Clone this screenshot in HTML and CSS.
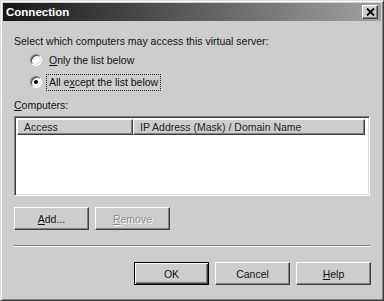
FILE: index.html
```html
<!DOCTYPE html>
<html lang="en">
<head>
  <meta charset="UTF-8">
  <title>Connection</title>
  <link rel="stylesheet" href="styles.css">
</head>
<body>
  <div class="window">
    <div class="titlebar">
      <span class="title">Connection</span>
      <button class="close" title="Close">
        <svg width="9" height="8" viewBox="0 0 9 8">
          <path d="M1 0.5 L8 7.5 M8 0.5 L1 7.5" stroke="#000" stroke-width="1.8" fill="none"/>
        </svg>
      </button>
    </div>

    <div class="content">
      <p class="prompt">Select which computers may access this virtual server:</p>

      <div class="radios">
        <label class="radio">
          <span class="dot"></span>
          <span class="radio-text"><u>O</u>nly the list below</span>
        </label>
        <label class="radio checked">
          <span class="dot"></span>
          <span class="radio-text focus">All e<u>x</u>cept the list below</span>
        </label>
      </div>

      <div class="field-label"><u>C</u>omputers:</div>
      <div class="listbox">
        <div class="list-header">
          <div class="col col-access">Access</div>
          <div class="col col-ip">IP Address (Mask) / Domain Name</div>
        </div>
      </div>

      <div class="button-row">
        <button class="btn"><u>A</u>dd...</button>
        <button class="btn" disabled><u>R</u>emove</button>
      </div>

      <div class="separator"></div>

      <div class="button-row dialog-buttons">
        <button class="btn btn-default">OK</button>
        <button class="btn">Cancel</button>
        <button class="btn"><u>H</u>elp</button>
      </div>
    </div>
  </div>
</body>
</html>
```

FILE: styles.css
```css
body {
  margin: 0;
  padding: 0;
  background: #cdcdcd;
  font-family: "Liberation Sans", Arial, sans-serif;
  font-size: 10.5px;
  line-height: 13px;
  color: #111;
}
.window {
  width: 384px;
  height: 301px;
  box-sizing: border-box;
  background: #cdcdcd;
  border: 1px solid;
  border-color: #dcdcdc #404040 #404040 #dcdcdc;
  box-shadow: inset 1px 1px #fff, inset -1px -1px #808080;
  padding: 2px;
}
.titlebar {
  height: 18px;
  display: flex;
  align-items: center;
  justify-content: space-between;
  padding-left: 3px;
  padding-right: 3px;
  background: linear-gradient(to right, #161616, #a2a2a2);
}
.title {
  color: #fff;
  font-weight: bold;
  font-size: 11.5px;
}
.close {
  width: 16px;
  height: 14px;
  padding: 0;
  display: flex;
  align-items: center;
  justify-content: center;
  background: #cdcdcd;
  border: 1px solid;
  border-color: #fff #404040 #404040 #fff;
  box-shadow: inset -1px -1px #808080;
}
.content {
  padding: 14px 11px 0 11px;
}
.prompt {
  margin: 0;
  height: 13px;
}
.radios {
  display: flex;
  flex-direction: column;
  gap: 6px;
  margin-top: 4px;
  padding-left: 16px;
}
.radio {
  display: flex;
  align-items: center;
  gap: 4px;
  height: 16px;
}
.dot {
  width: 12px;
  height: 12px;
  box-sizing: border-box;
  border-radius: 50%;
  background: #fff;
  border: 1px solid;
  border-color: #808080 #fff #fff #808080;
  box-shadow: inset 1px 1px #404040, inset -1px -1px #dcdcdc;
  display: flex;
  align-items: center;
  justify-content: center;
}
.checked .dot::after {
  content: "";
  width: 4px;
  height: 4px;
  border-radius: 50%;
  background: #000;
}
.radio-text {
  padding: 1px 2px;
  border: 1px solid transparent;
}
.focus {
  border: 1px dotted #222;
}
.field-label {
  margin-top: 9px;
  height: 13px;
}
.listbox {
  margin-top: 4px;
  height: 80px;
  box-sizing: border-box;
  background: #fff;
  border: 1px solid;
  border-color: #808080 #fff #fff #808080;
  box-shadow: inset 1px 1px #404040, inset -1px -1px #dcdcdc;
  padding: 2px;
}
.list-header {
  display: flex;
  width: calc(100% - 2px);
  height: 16px;
}
.col {
  box-sizing: border-box;
  background: #cdcdcd;
  border: 1px solid;
  border-color: #fff #404040 #404040 #fff;
  box-shadow: inset -1px -1px #808080;
  padding: 1px 6px 0 6px;
  color: #222;
}
.col-access {
  width: 116px;
}
.col-ip {
  flex: 1;
}
.button-row {
  display: flex;
  gap: 6px;
  margin-top: 11px;
}
.btn {
  width: 75px;
  height: 23px;
  padding: 0;
  box-sizing: border-box;
  font-family: inherit;
  font-size: 10.5px;
  color: #111;
  background: #cdcdcd;
  border: 1px solid;
  border-color: #fff #404040 #404040 #fff;
  box-shadow: inset -1px -1px #808080;
}
.btn:disabled {
  color: #8a8a8a;
  text-shadow: 1px 1px #fff;
}
.btn-default {
  border: 1px solid #000;
  box-shadow: inset 1px 1px #fff, inset -1px -1px #404040, inset -2px -2px #808080;
}
.separator {
  margin-top: 15px;
  height: 1px;
  background: #808080;
  border-bottom: 1px solid #fff;
}
.dialog-buttons {
  justify-content: flex-end;
  margin-top: 15px;
  margin-right: -1px;
}
```
